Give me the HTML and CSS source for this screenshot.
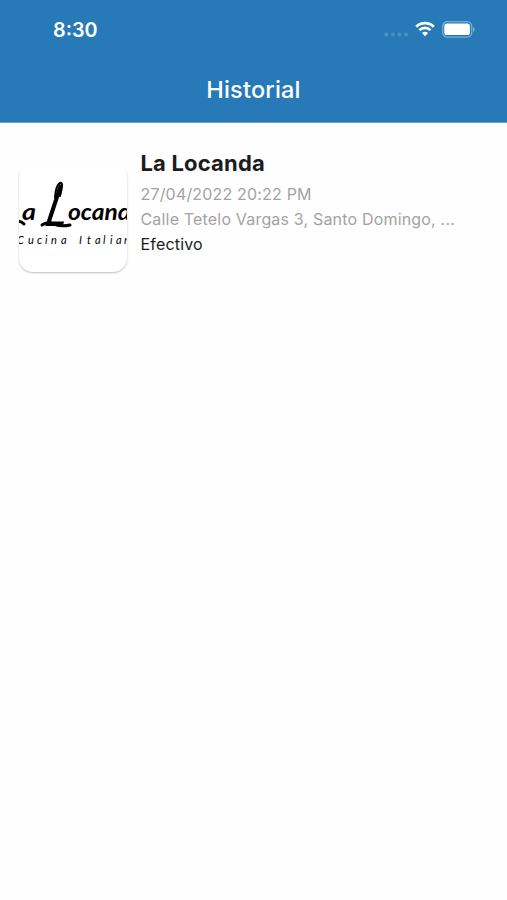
FILE: index.html
```html
<!doctype html>
<html lang="es">
    <head>
        <meta charset="utf-8" />
        <meta name="viewport" content="width=device-width, initial-scale=1" />
        <title>Historial</title>
        <link rel="stylesheet" href="styles.css">
    </head>
    <body>
        <header class="header">
            <div class="status-bar">
                <span class="time">8:30</span>
                <div class="status-icons">
                    <svg class="signal" width="24" height="5" viewBox="0 0 24 5">
                        <circle cx="2.3" cy="2.5" r="1.9" />
                        <circle cx="8.9" cy="2.5" r="1.9" />
                        <circle cx="15.4" cy="2.5" r="1.9" />
                        <circle cx="22" cy="2.5" r="1.9" />
                    </svg>
                    <svg class="wifi" width="20" height="16" viewBox="0 0 20 16">
                        <path d="M1.2 5.7a12.7 12.7 0 0 1 17.6 0" />
                        <path d="M4.4 9.1a8 8 0 0 1 11.2 0" />
                        <path class="wifi-dot" d="M6.9 12.1a4.6 4.6 0 0 1 6.2 0L10 15.3z" />
                    </svg>
                    <svg class="battery" width="33" height="17" viewBox="0 0 33 17">
                        <rect class="battery-case" x="0.7" y="0.7" width="29" height="15.4" rx="4.6" />
                        <rect class="battery-level" x="2.3" y="2.6" width="25.6" height="11.4" rx="2.6" />
                        <path class="battery-cap" d="M31 6c2.2.9 2.2 4 0 4.9z" />
                    </svg>
                </div>
            </div>
            <h1 class="title">Historial</h1>
        </header>

        <main class="orders">
            <article class="order">
                <div class="logo">
                    <svg width="108" height="108" viewBox="0 0 108 108">
                        <g class="logo-name">
                            <text x="3" y="56" textLength="14" lengthAdjust="spacingAndGlyphs">a</text>
                            <text class="logo-cap" transform="translate(24 62) skewX(-13)" textLength="22" lengthAdjust="spacingAndGlyphs">L</text>
                            <text x="49" y="56" textLength="63" lengthAdjust="spacingAndGlyphs">ocand</text>
                        </g>
                        <path class="flourish" d="M-2 57q4 0 7 3" />
                        <path class="flourish" d="M23 61q5-4 12-1t16 1" />
                        <path class="flourish flourish-loop" d="M36 33q1-12 5-14t0 13" />
                        <text class="logo-sub" y="80" x="-2 9 18 26 32 42 50 60 68 76 84 91 97 105">Cucina Italian</text>
                    </svg>
                </div>
                <div class="details">
                    <h2 class="name">La Locanda</h2>
                    <p class="date">27/04/2022 20:22 PM</p>
                    <p class="address">Calle Tetelo Vargas 3, Santo Domingo, ...</p>
                    <p class="payment">Efectivo</p>
                </div>
            </article>
        </main>
    </body>
</html>
```

FILE: styles.css
```css
body {
    margin: 0;
    background: #fefefe;
    font-family: Inter, sans-serif;
}

h1,
h2,
p {
    margin: 0;
    white-space: nowrap;
}

.header {
    box-sizing: border-box;
    height: 123px;
    background: #277ab7;
    border-bottom: 1px solid #6da5cf;
    color: white;
}

.status-bar {
    display: flex;
    justify-content: space-between;
    height: 60px;
    padding: 0 32px 0 53px;
}

.time {
    padding-top: 18px;
    font-size: 19.8px;
    font-weight: 600;
    line-height: 24px;
}

.status-icons {
    display: flex;
    align-items: flex-start;
    padding-top: 21px;
}

.signal {
    margin: 11px 7px 0 0;
    fill: #4c91c6;
}

.wifi {
    margin-right: 7px;
    fill: none;
    stroke: white;
    stroke-width: 2.7;
}

.wifi-dot {
    fill: white;
    stroke: none;
}

.battery-case {
    fill: none;
    stroke: #78aed8;
    stroke-width: 1.3;
}

.battery-level {
    fill: white;
}

.battery-cap {
    fill: #78aed8;
}

.title {
    padding-top: 15px;
    font-size: 23.5px;
    font-weight: 500;
    letter-spacing: 0.2px;
    line-height: 30px;
    text-align: center;
}

.orders {
    padding: 26px 19px;
}

.order {
    display: flex;
    gap: 13.5px;
}

.logo {
    width: 108px;
    height: 108px;
    margin-top: 15px;
    overflow: hidden;
    background: white;
    border-radius: 14px;
    box-shadow: 0 1px 2px rgba(0, 0, 0, 0.25);
    clip-path: inset(5px -3px -4px -3px);
}

.logo svg {
    display: block;
}

.logo-name {
    font-family: Lato, sans-serif;
    font-size: 22px;
    font-style: italic;
    font-weight: bold;
}

.logo-cap {
    font-size: 58px;
    font-weight: normal;
}

.logo-sub {
    font-family: Lato, sans-serif;
    font-size: 11px;
    font-style: italic;
}

.flourish {
    fill: none;
    stroke: black;
    stroke-width: 3;
    stroke-linecap: round;
}

.flourish-loop {
    stroke-width: 2;
}

.details {
    color: #1c1c1c;
    font-size: 16px;
    letter-spacing: 0.18px;
    line-height: 25px;
}

.name {
    padding-bottom: 4px;
    font-size: 22px;
    font-weight: 700;
    line-height: 29px;
}

.date,
.address {
    color: #a3a3a3;
}
```
